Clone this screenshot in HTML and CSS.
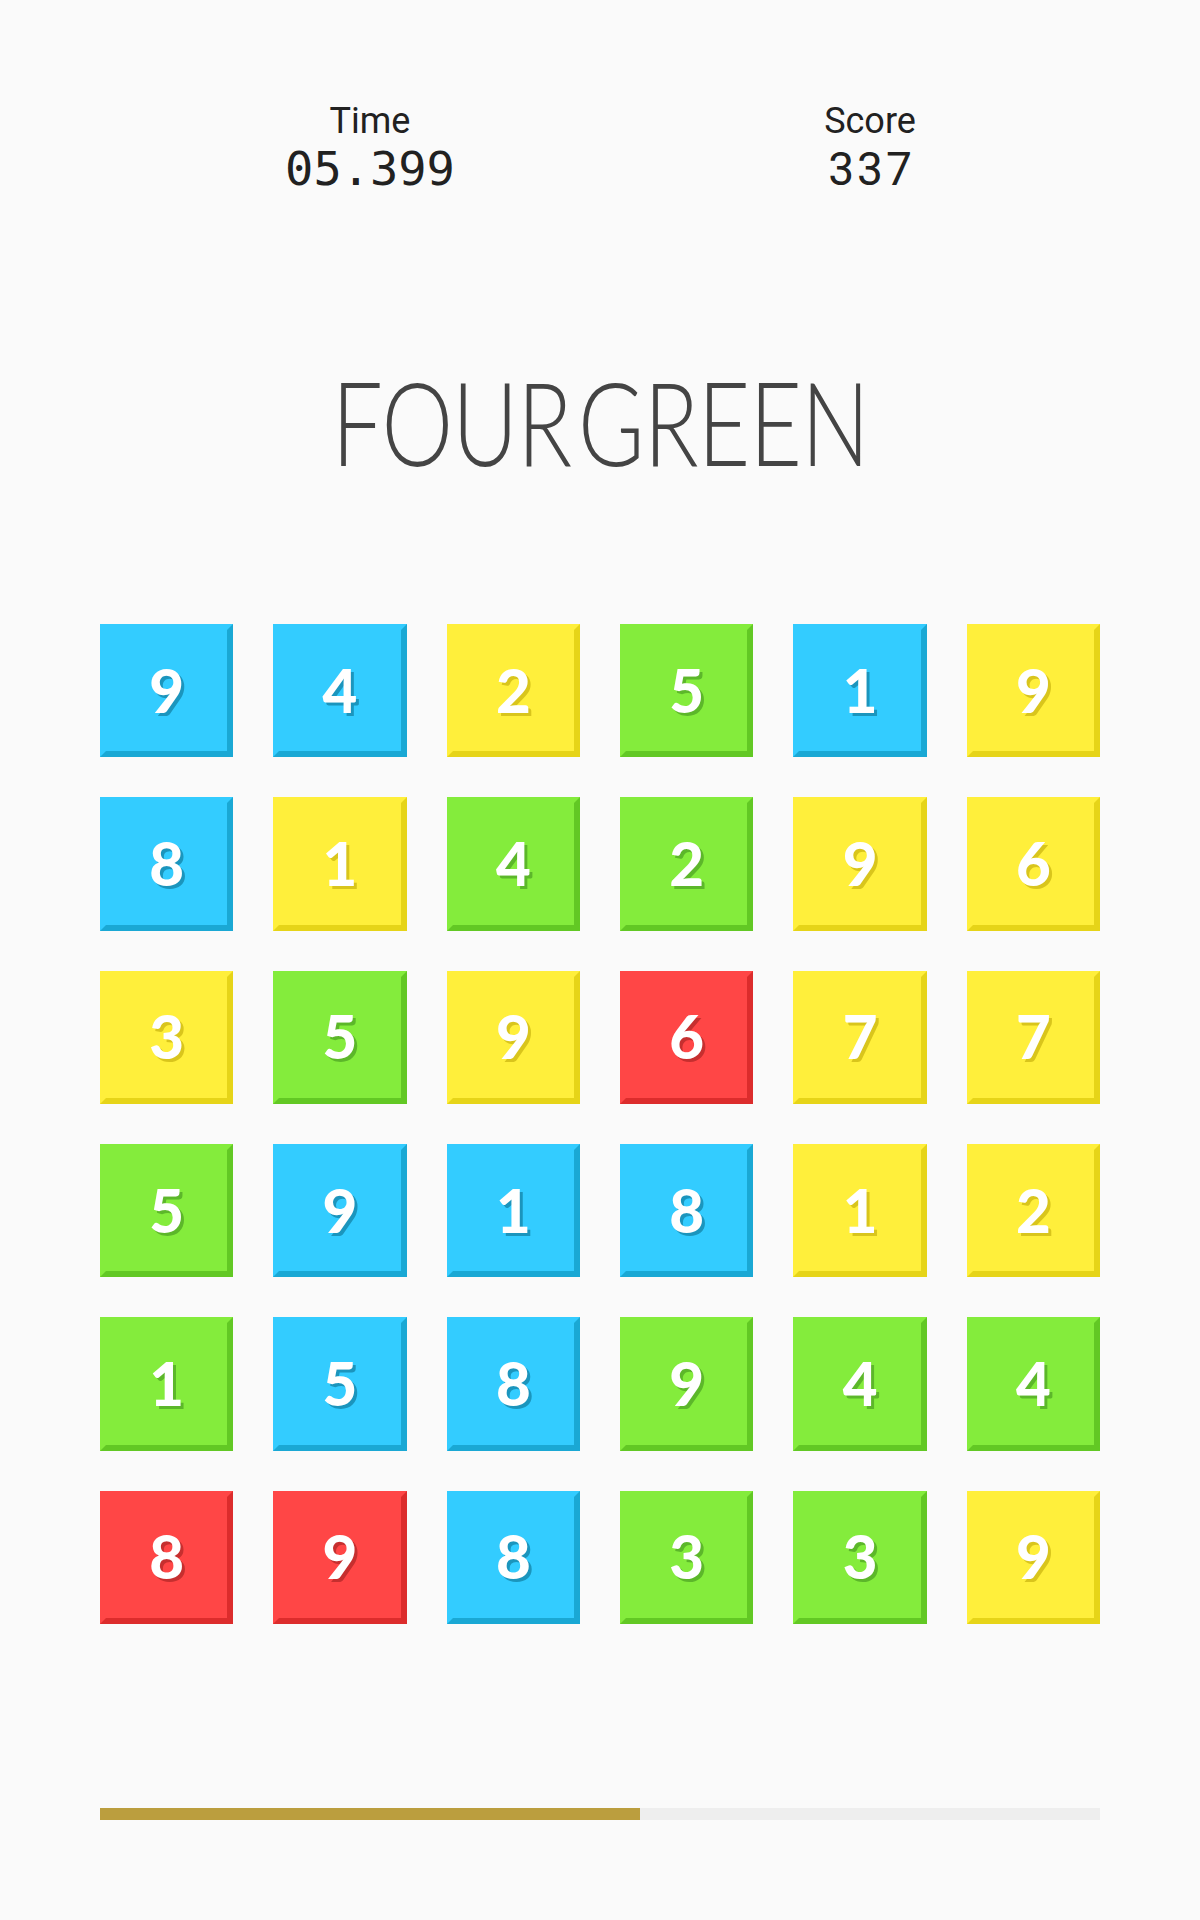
FILE: index.html
```html
<!DOCTYPE html>
<html>
<head>
<meta charset="utf-8">
<link rel="stylesheet" href="styles.css">
</head>
<body>
<div class="page">
  <header class="stats">
    <div class="stat">
      <div class="stat-label">Time</div>
      <div class="stat-value mono">05.399</div>
    </div>
    <div class="stat">
      <div class="stat-label">Score</div>
      <div class="stat-value score">337</div>
    </div>
  </header>
  <h1 class="title"><span class="title-text">FOUR GREEN</span></h1>
  <div class="board">
    <div class="tile blue"><span>9</span></div>
    <div class="tile blue"><span>4</span></div>
    <div class="tile yellow"><span>2</span></div>
    <div class="tile green"><span>5</span></div>
    <div class="tile blue"><span>1</span></div>
    <div class="tile yellow"><span>9</span></div>

    <div class="tile blue"><span>8</span></div>
    <div class="tile yellow"><span>1</span></div>
    <div class="tile green"><span>4</span></div>
    <div class="tile green"><span>2</span></div>
    <div class="tile yellow"><span>9</span></div>
    <div class="tile yellow"><span>6</span></div>

    <div class="tile yellow"><span>3</span></div>
    <div class="tile green"><span>5</span></div>
    <div class="tile yellow"><span>9</span></div>
    <div class="tile red"><span>6</span></div>
    <div class="tile yellow"><span>7</span></div>
    <div class="tile yellow"><span>7</span></div>

    <div class="tile green"><span>5</span></div>
    <div class="tile blue"><span>9</span></div>
    <div class="tile blue"><span>1</span></div>
    <div class="tile blue"><span>8</span></div>
    <div class="tile yellow"><span>1</span></div>
    <div class="tile yellow"><span>2</span></div>

    <div class="tile green"><span>1</span></div>
    <div class="tile blue"><span>5</span></div>
    <div class="tile blue"><span>8</span></div>
    <div class="tile green"><span>9</span></div>
    <div class="tile green"><span>4</span></div>
    <div class="tile green"><span>4</span></div>

    <div class="tile red"><span>8</span></div>
    <div class="tile red"><span>9</span></div>
    <div class="tile blue"><span>8</span></div>
    <div class="tile green"><span>3</span></div>
    <div class="tile green"><span>3</span></div>
    <div class="tile yellow"><span>9</span></div>
  </div>
  <div class="progress"><div class="progress-fill" style="width:54%"></div></div>
</div>
</body>
</html>
```
FILE: styles.css
```css
html, body {
  margin: 0;
  padding: 0;
  background: #fafafa;
}
.page {
  width: 1200px;
  min-height: 1920px;
  padding-top: 103px;
  box-sizing: border-box;
  font-family: Roboto, "Liberation Sans", sans-serif;
  color: #212121;
}
.stats {
  display: flex;
  padding-left: 120px;
}
.stat {
  width: 500px;
  display: flex;
  flex-direction: column;
  align-items: center;
  gap: 7px;
}
.stat-label {
  font-size: 36px;
  line-height: 36px;
}
.stat-value {
  font-size: 46px;
  line-height: 46px;
}
.stat-value.mono {
  font-family: "DejaVu Sans Mono", "Liberation Mono", monospace;
  font-size: 47px;
}
.stat-value.score {
  letter-spacing: 3px;
  padding-left: 3px;
}
.title {
  margin: 172px 0 0;
  display: flex;
  justify-content: center;
  font-family: Lato, Inter, sans-serif;
  font-weight: 300;
  font-size: 116px;
  line-height: 116px;
  color: #444444;
}
.title-text {
  display: block;
  white-space: nowrap;
  letter-spacing: -1px;
  word-spacing: -22px;
  transform: scaleX(0.78);
}
.board {
  width: 1000px;
  margin: 144px auto 0;
  display: grid;
  grid-template-columns: repeat(6, 1fr);
  gap: 40px;
}
.tile {
  aspect-ratio: 1 / 1;
  box-sizing: border-box;
  border: 6px solid;
  display: flex;
  align-items: center;
  justify-content: center;
  font-family: Lato, "Open Sans", sans-serif;
  font-weight: 900;
  font-size: 60px;
  color: #ffffff;
}
.tile span {
  display: block;
  line-height: 1;
  margin-top: -2px;
}
.blue {
  background: #33ccff;
  border-color: #33ccff #1aa8d4 #1aa8d4 #33ccff;
  text-shadow: 3px 3px 0 #1b95bd;
}
.yellow {
  background: #ffef3b;
  border-color: #ffef3b #e6d418 #e6d418 #ffef3b;
  text-shadow: 3px 3px 0 #d9c51c;
}
.green {
  background: #84ec3c;
  border-color: #84ec3c #62c824 #62c824 #84ec3c;
  text-shadow: 3px 3px 0 #5cb72a;
}
.red {
  background: #ff4646;
  border-color: #ff4646 #dc2c2c #dc2c2c #ff4646;
  text-shadow: 3px 3px 0 #c62f2f;
}
.progress {
  width: 1000px;
  height: 12px;
  margin: 184px auto 0;
  background: #eeeeee;
}
.progress-fill {
  height: 100%;
  background: #bb9e3e;
}
```
